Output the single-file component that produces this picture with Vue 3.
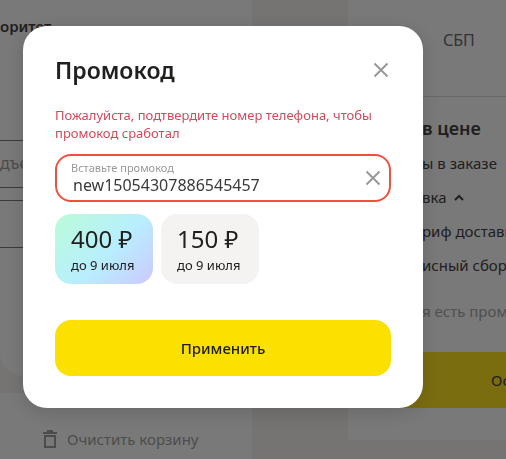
<script setup>
import { ref } from 'vue'

const code = ref('new15054307886545457')
const selected = ref(0)
const offers = [
  { amount: '400 ₽', until: 'до 9 июля' },
  { amount: '150 ₽', until: 'до 9 июля' },
]
</script>

<template>
  <div class="page">
    <main class="cart">
      <section class="address">
        <h2 class="address-title">оритет</h2>
        <div class="field">дъезд</div>
        <div class="field"></div>
      </section>
      <footer class="cart-footer">
        <button class="clear" type="button">
          <svg width="14" height="18" viewBox="0 0 14 18" fill="none" stroke="currentColor" stroke-width="2">
            <path d="M0 3h14M4 1h6M2 6v11h10V6z" />
          </svg>
          Очистить корзину
        </button>
      </footer>
    </main>
    <aside class="summary">
      <div class="payment">СБП</div>
      <div class="totals">
        <h2 class="totals-title">в цене</h2>
        <p class="row">ы в заказе</p>
        <p class="row">
          вка
          <svg width="10" height="8" viewBox="0 0 10 8" fill="none" stroke="currentColor" stroke-width="2">
            <path d="M1 7l4-4 4 4" />
          </svg>
        </p>
        <p class="row">риф доставки</p>
        <p class="row">исный сбор</p>
        <p class="row hint">я есть промокод</p>
      </div>
      <button class="order" type="button">Оформить</button>
    </aside>

    <div class="overlay">
      <form class="modal" role="dialog" aria-labelledby="promo-title" @submit.prevent>
        <header class="modal-head">
          <h1 id="promo-title">Промокод</h1>
          <button class="icon-button" type="button">
            <svg width="16" height="16" viewBox="0 0 16 16" fill="none" stroke="currentColor" stroke-width="2">
              <path d="M1.500 1.500l13 13M14.500 1.500l-13 13" />
            </svg>
          </button>
        </header>
        <p class="error">Пожалуйста, подтвердите номер телефона, чтобы промокод сработал</p>
        <div class="promo-field">
          <div class="promo-text">
            <label for="promo">Вставьте промокод</label>
            <input id="promo" v-model="code" type="text" spellcheck="false" />
          </div>
          <button class="icon-button" type="button" @click="code = ''">
            <svg width="16" height="16" viewBox="0 0 16 16" fill="none" stroke="currentColor" stroke-width="2">
              <path d="M1.500 1.500l13 13M14.500 1.500l-13 13" />
            </svg>
          </button>
        </div>
        <div class="offers">
          <button
            v-for="(offer, i) in offers"
            :key="offer.amount"
            class="offer"
            :class="{ active: selected === i }"
            type="button"
            @click="selected = i"
          >
            <span class="amount">{{ offer.amount }}</span>
            <span class="until">{{ offer.until }}</span>
          </button>
        </div>
        <button class="apply" type="submit">Применить</button>
      </form>
    </div>
  </div>
</template>

<style>
body {
  margin: 0;
}
</style>

<style scoped>
* {
  box-sizing: border-box;
}
.page {
  display: grid;
  grid-template-columns: minmax(0, 1fr) minmax(0, 158px);
  column-gap: 96px;
  min-height: 100vh;
  overflow: hidden;
  background: #ebe8e4;
  color: #42403e;
  font-family: "Noto Sans", "Open Sans", sans-serif;
  font-size: 15px;
  line-height: 20px;
  white-space: nowrap;
}
h1,
h2,
p {
  margin: 0;
}
button {
  padding: 0;
  border: 0;
  background: none;
  color: inherit;
  font: inherit;
}
svg {
  display: block;
}
.cart {
  display: flex;
  flex-direction: column;
  justify-content: space-between;
  gap: 16px;
}
.address {
  display: flex;
  flex-direction: column;
  gap: 12px;
  padding: 16px 0 128px;
  border-radius: 0 0 24px 24px;
  background: #f3f3f3;
}
.address-title {
  margin-bottom: 92px;
  font-size: 15px;
  line-height: 20px;
  font-weight: 600;
}
.field {
  height: 48px;
  border: 1px solid #777;
  border-width: 1px 0;
  color: #999;
  font-size: 16px;
  line-height: 44px;
}
.cart-footer {
  padding: 36px 43px 10px;
  background: #f3f3f3;
}
.clear {
  display: flex;
  align-items: center;
  gap: 10px;
  color: #999;
}
.summary {
  align-self: start;
  padding-bottom: 32px;
  background: #f3f3f3;
}
.payment {
  padding: 30px 30px 46px 95px;
  border-bottom: 1px solid #d0d0d0;
  color: #666;
  font-size: 16px;
}
.totals {
  display: flex;
  flex-direction: column;
  gap: 14px;
  padding: 20px 0 31px 74px;
}
.totals-title {
  font-size: 18px;
  line-height: 22px;
  font-weight: 600;
}
.row {
  display: flex;
  align-items: center;
  gap: 8px;
}
.hint {
  margin-top: 12px;
  color: #a0a0a0;
}
.order {
  width: 100%;
  height: 56px;
  padding-left: 143px;
  background: #f5da20;
  text-align: left;
}
.overlay {
  position: fixed;
  inset: 0;
  display: flex;
  align-items: flex-start;
  padding: 26px 23px;
  background: rgba(0, 0, 0, 0.5);
  white-space: normal;
}
.modal {
  width: 100%;
  max-width: 400px;
  padding: 28px 32px 32px;
  border-radius: 24px;
  background: #fff;
  color: #21201f;
  box-shadow: 0 4px 20px rgba(0, 0, 0, 0.15);
}
.modal-head {
  display: flex;
  align-items: center;
  justify-content: space-between;
  margin-bottom: 20px;
}
.modal-head h1 {
  font-size: 23px;
  line-height: 32px;
  font-weight: 600;
}
.icon-button {
  padding: 2px;
  color: #999;
}
.error {
  margin-bottom: 12px;
  color: #d8475a;
  font-size: 13px;
  line-height: 18px;
}
.promo-field {
  display: flex;
  align-items: center;
  height: 48px;
  padding: 0 6px 0 14px;
  border: 2px solid #f0503c;
  border-radius: 16px;
}
.promo-text {
  display: flex;
  flex: 1;
  flex-direction: column;
  min-width: 0;
}
.promo-text label {
  color: #999;
  font-size: 11px;
  line-height: 14px;
}
.promo-text input {
  width: 100%;
  padding: 0 2px;
  border: 0;
  outline: 0;
  background: none;
  color: #3a3a3a;
  font: inherit;
  font-size: 16px;
  line-height: 20px;
}
.offers {
  display: flex;
  gap: 8px;
  margin: 12px 0 36px;
}
.offer {
  display: flex;
  flex-direction: column;
  align-items: flex-start;
  min-width: 98px;
  padding: 9px 16px 9px;
  border-radius: 16px;
  background: #f5f3f2;
}
.offer.active {
  background: linear-gradient(135deg, #bbfcd8 0%, #b8eeff 55%, #cdc8ff 100%);
}
.amount {
  font-size: 24px;
  line-height: 32px;
}
.until {
  font-size: 13px;
  line-height: 20px;
}
.apply {
  display: block;
  width: 100%;
  height: 56px;
  border-radius: 16px;
  background: #fbe000;
  font-weight: 500;
}
</style>
